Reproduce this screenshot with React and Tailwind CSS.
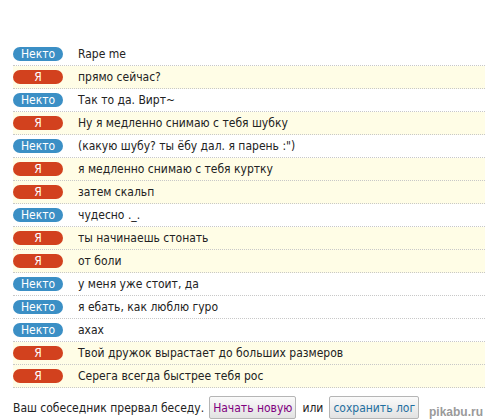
import React from "react";

const msgs = [
  ["n", "Rape me"],
  ["y", "прямо сейчас?"],
  ["n", "Так то да. Вирт~"],
  ["y", "Ну я медленно снимаю с тебя шубку"],
  ["n", "(какую шубу? ты ёбу дал. я парень :\")"],
  ["y", "я медленно снимаю с тебя куртку"],
  ["y", "затем скальп"],
  ["n", "чудесно ._."],
  ["y", "ты начинаешь стонать"],
  ["y", "от боли"],
  ["n", "у меня уже стоит, да"],
  ["n", "я ебать, как люблю гуро"],
  ["n", "ахах"],
  ["y", "Твой дружок вырастает до больших размеров"],
  ["y", "Серега всегда быстрее тебя рос"],
];

export default function App() {
  return (
    <div
      className="w-[485px] h-[420px] bg-white relative overflow-hidden text-[12px] text-[#222]"
      style={{ fontFamily: "'DejaVu Sans Condensed', 'DejaVu Sans', sans-serif" }}
    >
      <div className="pt-[43px] pl-[13px]">
        {msgs.map(([who, text], i) => (
          <div
            key={i}
            className={`flex items-center h-[23px] border-b border-dotted border-[#c8c8c8] ${
              who === "y" ? "bg-[#fffde6]" : "bg-white"
            }`}
          >
            <div
              className={`w-[50px] h-[14px] rounded-[7px] flex items-center justify-center text-white text-[12px] leading-none ${
                who === "y" ? "bg-[#d2411e]" : "bg-[#3b8fc5]"
              }`}
            >
              {who === "y" ? "Я" : "Некто"}
            </div>
            <div className="ml-[15px] leading-none">{text}</div>
          </div>
        ))}
        <div className="flex items-center h-[29px] mt-[5px]">
          <span>Ваш собеседник прервал беседу.</span>
          <button className="ml-[5px] h-[23px] px-[3px] border border-[#b5b5b5] rounded-[2px] bg-gradient-to-b from-[#fafafa] to-[#e2e2e2] text-[#800080] text-[12px]">
            Начать новую
          </button>
          <span className="mx-[6px]">или</span>
          <button className="h-[23px] px-[3px] border border-[#b5b5b5] rounded-[2px] bg-gradient-to-b from-[#fafafa] to-[#e2e2e2] text-[#1f6fa0] text-[12px]">
            сохранить лог
          </button>
        </div>
      </div>
      <div
        className="absolute right-[2px] bottom-[2px] text-[12px] font-bold text-[#9a9a9a] leading-none"
        style={{ fontFamily: "'Liberation Sans', sans-serif", textShadow: "0 0 1px #fff, 0 0 1px #fff" }}
      >
        pikabu.ru
      </div>
    </div>
  );
}
